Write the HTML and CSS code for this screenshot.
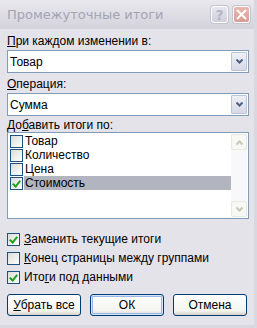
FILE: index.html
```html
<!DOCTYPE html>
<html lang="ru">
<head>
    <meta charset="UTF-8">
    <title>Промежуточные итоги</title>
    <link rel="stylesheet" href="styles.css">
</head>
<body>
    <div class="window">
        <div class="titlebar">
            <span class="title">Промежуточные итоги</span>
            <div class="title-buttons">
                <span class="tbtn help">?</span>
                <span class="tbtn close">
                    <svg width="11" height="11" viewBox="0 0 11 11"><path d="M1.5 1.5 L9.5 9.5 M9.5 1.5 L1.5 9.5" stroke="#fff" stroke-width="2" stroke-linecap="round"/></svg>
                </span>
            </div>
        </div>

        <div class="content">
            <label class="field-label"><u>П</u>ри каждом изменении в:</label>
            <div class="combo">
                <span class="combo-value">Товар</span>
                <span class="combo-btn"><svg width="7" height="5" viewBox="0 0 7 5"><path d="M0.5 0.5 L3.5 3.5 L6.5 0.5" stroke="#4d6185" stroke-width="2" fill="none"/></svg></span>
            </div>

            <label class="field-label"><u>О</u>перация:</label>
            <div class="combo">
                <span class="combo-value">Сумма</span>
                <span class="combo-btn"><svg width="7" height="5" viewBox="0 0 7 5"><path d="M0.5 0.5 L3.5 3.5 L6.5 0.5" stroke="#4d6185" stroke-width="2" fill="none"/></svg></span>
            </div>

            <label class="field-label list-label">До<u>б</u>авить итоги по:</label>
            <div class="listbox">
                <div class="list-items">
                    <div class="list-item"><span class="chk"></span><span class="item-text">Товар</span></div>
                    <div class="list-item"><span class="chk"></span><span class="item-text">Количество</span></div>
                    <div class="list-item"><span class="chk"></span><span class="item-text">Цена</span></div>
                    <div class="list-item selected"><span class="chk checked"></span><span class="item-text">Стоимость</span></div>
                </div>
                <div class="scrollbar">
                    <span class="sb-btn"><svg width="7" height="5" viewBox="0 0 7 5"><path d="M0.5 4.5 L3.5 1.5 L6.5 4.5" stroke="#c9c7ba" stroke-width="2" fill="none"/></svg></span>
                    <span class="sb-btn"><svg width="7" height="5" viewBox="0 0 7 5"><path d="M0.5 0.5 L3.5 3.5 L6.5 0.5" stroke="#c9c7ba" stroke-width="2" fill="none"/></svg></span>
                </div>
            </div>

            <div class="options">
                <div class="option"><span class="chk checked"></span><span><u>З</u>аменить текущие итоги</span></div>
                <div class="option"><span class="chk"></span><span><u>К</u>онец страницы между группами</span></div>
                <div class="option"><span class="chk checked"></span><span>Ито<u>г</u>и под данными</span></div>
            </div>

            <div class="buttons">
                <button type="button"><u>У</u>брать все</button>
                <button type="button" class="default">ОК</button>
                <button type="button">Отмена</button>
            </div>
        </div>
    </div>
</body>
</html>
```

FILE: styles.css
```css
body {
    margin: 0;
    padding: 0;
    font-family: Tahoma, "Liberation Sans", sans-serif;
    font-size: 12px;
    color: #000;
    background-color: #e4e3ea;
}

.window {
    width: 257px;
    height: 328px;
    box-sizing: border-box;
    background-color: #e4e3ea;
    border-right: 3px solid #d9d8e0;
    border-bottom: 3px solid #d9d8e0;
    display: flex;
    flex-direction: column;
}

/* заголовок неактивного окна */
.titlebar {
    height: 29px;
    display: flex;
    align-items: center;
    justify-content: space-between;
    padding: 0 4px 0 7px;
    background: linear-gradient(#e9e9ef, #dcdbe3 60%, #d4d3dc);
}

.title {
    font-family: "DejaVu Sans", sans-serif;
    font-size: 13px;
    color: #a4a3b4;
}

.title-buttons {
    display: flex;
    gap: 5px;
}

.tbtn {
    width: 17px;
    height: 17px;
    box-sizing: border-box;
    border: 1px solid #fff;
    border-radius: 3px;
    display: flex;
    align-items: center;
    justify-content: center;
    box-shadow: 0 0 0 1px #c4c3cf;
}

.help {
    background: linear-gradient(#e6e6ee, #cfcfdb);
    color: #b5b4c6;
    font-family: "DejaVu Sans", sans-serif;
    font-size: 14px;
    font-weight: bold;
}

.close {
    background: linear-gradient(#eab8b0, #d99c92);
}

.content {
    flex: 1;
    display: flex;
    flex-direction: column;
    padding: 6px 5px 0 7px;
}

.field-label {
    display: block;
    line-height: 13px;
    margin-bottom: 2px;
}

.list-label {
    margin-top: -2px;
    margin-bottom: 0;
}

.combo {
    height: 23px;
    box-sizing: border-box;
    border: 1px solid #7f9db9;
    background-color: #fff;
    display: flex;
    align-items: center;
    padding: 1px;
    margin-bottom: 5px;
}

.combo-value {
    flex: 1;
    padding-left: 1px;
}

.combo-btn {
    width: 16px;
    height: 19px;
    box-sizing: border-box;
    border: 1px solid #bac5d8;
    border-radius: 1px;
    background: linear-gradient(#eef0f6, #d6d9e6);
    display: flex;
    align-items: center;
    justify-content: center;
}

.listbox {
    height: 87px;
    box-sizing: border-box;
    border: 1px solid #7f9db9;
    background-color: #fff;
    display: flex;
    padding: 1px;
}

.list-items {
    flex: 1;
}

.list-item {
    height: 14px;
    display: flex;
    align-items: center;
    padding-left: 1px;
}

.list-item .item-text {
    flex: 1;
    height: 14px;
    line-height: 14px;
    margin-left: 1px;
    padding-left: 1px;
}

.list-item.selected .item-text {
    background-color: #b2b4bf;
}

.scrollbar {
    width: 16px;
    background-color: #f8f8fa;
    display: flex;
    flex-direction: column;
    justify-content: space-between;
}

.sb-btn {
    height: 16px;
    box-sizing: border-box;
    border: 1px solid #e9e8e1;
    border-radius: 2px;
    background-color: #f7f7f3;
    display: flex;
    align-items: center;
    justify-content: center;
}

.chk {
    width: 13px;
    height: 13px;
    box-sizing: border-box;
    border: 1px solid #1c5180;
    background: linear-gradient(135deg, #dcdcd7, #fff);
    flex: none;
    position: relative;
}

.chk.checked::after {
    content: "";
    position: absolute;
    left: 3px;
    top: 1px;
    width: 3px;
    height: 6px;
    border: solid #21a121;
    border-width: 0 2px 2px 0;
    transform: rotate(40deg);
}

.options {
    margin-top: 14px;
    display: flex;
    flex-direction: column;
    gap: 6px;
}

.option {
    display: flex;
    align-items: center;
    gap: 4px;
    line-height: 13px;
}

.buttons {
    margin-top: 10px;
    display: flex;
    justify-content: space-between;
    padding-right: 2px;
}

button {
    width: 74px;
    height: 22px;
    font-family: Tahoma, "Liberation Sans", sans-serif;
    font-size: 12px;
    color: #000;
    border: 1px solid #003c74;
    border-radius: 3px;
    background: linear-gradient(#fff, #f3f3ef 80%, #d6d0c5);
    padding: 0;
}

button.default {
    box-shadow: inset 0 0 0 1px #cee7ff, inset 0 0 0 2px #98b8ea;
}
```
